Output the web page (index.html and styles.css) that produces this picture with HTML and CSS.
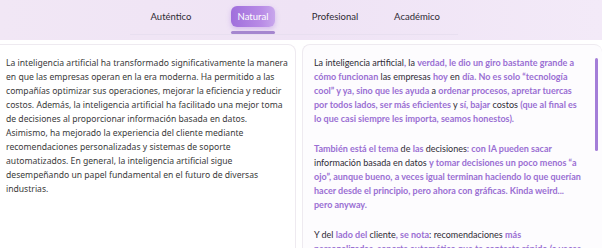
FILE: index.html
```html
<!DOCTYPE html>
<html lang="es">
<head>
    <meta charset="UTF-8">
    <meta name="viewport" content="width=device-width, initial-scale=1.0">
    <title>Reescritura de texto</title>
    <link rel="stylesheet" href="styles.css">
</head>
<body>

    <!-- Style tabs -->
    <header class="tab-bar">
        <nav class="tabs">
            <button class="tab">Auténtico</button>
            <button class="tab active">Natural</button>
            <button class="tab">Profesional</button>
            <button class="tab">Académico</button>
        </nav>
    </header>

    <!-- Original vs rewritten text -->
    <main class="panels">
        <section class="panel panel-original">
            <p>La inteligencia artificial ha transformado significativamente la manera<br>
            en que las empresas operan en la era moderna. Ha permitido a las<br>
            compañías optimizar sus operaciones, mejorar la eficiencia y reducir<br>
            costos. Además, la inteligencia artificial ha facilitado una mejor toma<br>
            de decisiones al proporcionar información basada en datos.<br>
            Asimismo, ha mejorado la experiencia del cliente mediante<br>
            recomendaciones personalizadas y sistemas de soporte<br>
            automatizados. En general, la inteligencia artificial sigue<br>
            desempeñando un papel fundamental en el futuro de diversas<br>
            industrias.</p>
        </section>

        <section class="panel panel-result">
            <div class="result-text">
                <p>La inteligencia artificial<span class="hl">,</span> la <span class="hl">verdad, le dio un giro bastante grande a<br>
                cómo funcionan</span> las empresas <span class="hl">hoy</span> en <span class="hl">día. No es solo “tecnología<br>
                cool” y ya, sino que les ayuda</span> a <span class="hl">ordenar procesos, apretar tuercas<br>
                por todos lados, ser más eficientes</span> y <span class="hl">sí, bajar</span> costos <span class="hl">(que al final es<br>
                lo que casi siempre les importa, seamos honestos).</span></p>

                <p><span class="hl">También está el tema</span> de <span class="hl">las</span> decisiones<span class="hl">: con IA pueden sacar</span><br>
                información basada en datos <span class="hl">y tomar decisiones un poco menos “a<br>
                ojo”, aunque bueno, a veces igual terminan haciendo lo que querían<br>
                hacer desde el principio, pero ahora con gráficas. Kinda weird...<br>
                pero anyway.</span></p>

                <p>Y del <span class="hl">lado del</span> cliente<span class="hl">, se nota</span>: recomendaciones <span class="hl">más<br>
                personalizadas, soporte automático que te contesta rápido (a veces<br>
                demasiado rápido) y cosas así.</span></p>
            </div>
            <div class="scrollbar"></div>
        </section>
    </main>

</body>
</html>
```

FILE: styles.css
```css
body {
    margin: 0;
    height: 248px;
    overflow: hidden;
    background: #ffffff;
    font-family: "Noto Sans", sans-serif;
}
.tab-bar {
    height: 40px;
    background: linear-gradient(90deg, #f1e7f5 0%, #efe3f5 50%, #f3eaf8 100%);
    display: flex;
    justify-content: center;
}
.tabs {
    display: grid;
    grid-template-columns: repeat(4, 82px);
    justify-items: center;
    align-items: start;
    margin-right: 14px;
    padding-top: 6px;
    height: 28px;
    border-bottom: 1px solid #e8dff0;
}
.tab {
    position: relative;
    font-family: Lato, sans-serif;
    font-size: 9.5px;
    color: #2e2a33;
    background: none;
    border: none;
    height: 21px;
    padding: 0 7px;
    border-radius: 6px;
    cursor: pointer;
}
.tab.active {
    color: #ffffff;
    background: linear-gradient(90deg, #a06fdc 0%, #b98ce6 70%, #c8a7ec 100%);
    box-shadow: 0 2px 5px rgba(160, 110, 220, 0.35);
}
.tab.active::after {
    content: "";
    position: absolute;
    left: 0;
    right: 0;
    top: 25px;
    height: 3px;
    border-radius: 2px;
    background: #a586cf;
}
.panels {
    display: grid;
    grid-template-columns: 296px 1fr;
    gap: 6px;
    padding-top: 4px;
}
.panel {
    height: 230px;
    border: 1px solid #eeeaf0;
    border-radius: 8px;
    box-sizing: border-box;
}
.panel p {
    margin: 0;
}
.panel-original {
    border-left: none;
    border-top-left-radius: 0;
    padding: 11px 2px 0 6px;
    font-size: 8.6px;
    line-height: 14px;
    color: #3a3a3a;
    white-space: nowrap;
}
.panel-result {
    display: flex;
    border-right: none;
    padding: 11px 4px 0 11px;
    background: #fdfcfe;
}
.result-text {
    flex: 1;
    font-family: Lato, sans-serif;
    font-size: 9px;
    line-height: 14px;
    color: #2f2b36;
}
.result-text p {
    margin-bottom: 16px;
}
.hl {
    color: #9a6fd3;
    font-weight: 700;
}
.scrollbar {
    width: 3px;
    height: 93px;
    margin-top: 2px;
    border-radius: 2px;
    background: #a47ed8;
}
```
